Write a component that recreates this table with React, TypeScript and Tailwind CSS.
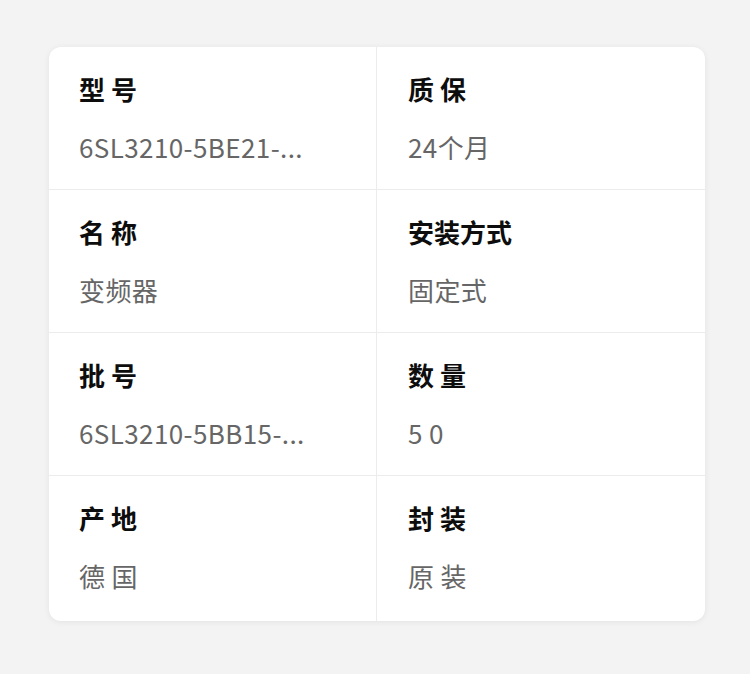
import React from "react";

const rows: [string, string, string, string][] = [
  ["型 号", "6SL3210-5BE21-...", "质 保", "24个月"],
  ["名 称", "变频器", "安装方式", "固定式"],
  ["批 号", "6SL3210-5BB15-...", "数 量", "5 0"],
  ["产 地", "德 国", "封 装", "原 装"],
];

function Cell({ label, value, right, last }: { label: string; value: string; right?: boolean; last?: boolean }) {
  return (
    <div
      className={
        "flex flex-col gap-[30px] pt-[28px] " +
        (last ? "pb-[31px] " : "pb-[28px] ") +
        (right ? "pl-[31px]" : "pl-[30px] border-r border-[#ececec]")
      }
    >
      <div className="text-[26px] leading-[28px] font-bold text-[#0d0d0d]">{label}</div>
      <div className="text-[26px] leading-[28px] tracking-[0.4px] text-[#666666]">{value}</div>
    </div>
  );
}

export default function App() {
  return (
    <div
      className="w-[750px] h-[674px] bg-[#f3f3f3] pl-[49px] pt-[47px]"
      style={{ fontFamily: '"Noto Sans CJK SC", "Noto Sans", sans-serif' }}
    >
      <div className="w-[656px] bg-white rounded-[12px] shadow-[0_1px_6px_rgba(0,0,0,0.07)] overflow-hidden">
        {rows.map((r, i) => {
          const last = i === rows.length - 1;
          return (
            <div key={i} className={"grid grid-cols-2 " + (last ? "" : "border-b border-[#ececec]")}>
              <Cell label={r[0]} value={r[1]} last={last} />
              <Cell label={r[2]} value={r[3]} right last={last} />
            </div>
          );
        })}
      </div>
    </div>
  );
}
